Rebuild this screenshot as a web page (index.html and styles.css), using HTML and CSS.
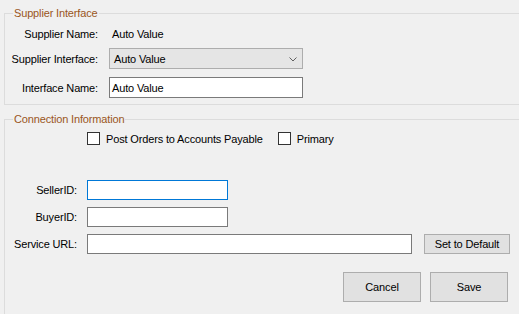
FILE: index.html
```html
<!DOCTYPE html>
<html>
<head>
<meta charset="utf-8">
<link rel="stylesheet" href="styles.css">
</head>
<body>
<div class="form">
  <fieldset class="group g1">
    <legend>Supplier Interface</legend>
    <div class="row r1">
      <span class="label l1">Supplier Name:</span>
      <span class="value">Auto Value</span>
    </div>
    <div class="row r2">
      <span class="label l1">Supplier Interface:</span>
      <div class="combo">
        <span>Auto Value</span>
        <svg class="chev" width="8" height="5" viewBox="0 0 8 5"><path d="M0.5 0.5 L4 4 L7.5 0.5" fill="none" stroke="#606060" stroke-width="1"/></svg>
      </div>
    </div>
    <div class="row r3">
      <span class="label l1">Interface Name:</span>
      <div class="textbox tb1">Auto Value</div>
    </div>
  </fieldset>

  <fieldset class="group g2">
    <legend>Connection Information</legend>
    <div class="checks">
      <label class="check"><span class="box"></span><span>Post Orders to Accounts Payable</span></label>
      <label class="check c2"><span class="box"></span><span>Primary</span></label>
    </div>
    <div class="row s1">
      <span class="label l2">SellerID:</span>
      <div class="textbox tb2 focus"></div>
    </div>
    <div class="row s2">
      <span class="label l2">BuyerID:</span>
      <div class="textbox tb2"></div>
    </div>
    <div class="row s3">
      <span class="label l2">Service URL:</span>
      <div class="textbox tb3"></div>
      <button class="btn small">Set to Default</button>
    </div>
    <div class="actions">
      <button class="btn big">Cancel</button>
      <button class="btn big">Save</button>
    </div>
  </fieldset>
</div>
</body>
</html>
```

FILE: styles.css
```css
html, body {
  margin: 0;
  padding: 0;
}
body {
  width: 519px;
  height: 314px;
  overflow: hidden;
  background: #f0f0f0;
  font-family: "Liberation Sans", Arial, sans-serif;
  font-size: 11px;
  letter-spacing: -0.15px;
  color: #000;
}
.form {
  display: flex;
  flex-direction: column;
}
.group {
  margin: 0 0 0 4px;
  padding: 0;
  border: 1px solid #dcdcdc;
  border-right: none;
  min-width: 0;
  width: 515px;
  box-sizing: border-box;
}
.group legend {
  margin-left: 8px;
  padding: 0 1px;
  line-height: 14px;
  height: 14px;
  color: #9a561c;
}
.g1 {
  margin-top: 6px;
  padding-bottom: 6px;
}
.g2 {
  margin-top: 7px;
  height: 203px;
  border-bottom: none;
}
.row {
  display: flex;
  align-items: center;
}
.label {
  text-align: right;
  flex: none;
}
.l1 {
  width: 93px;
  margin-right: 11px;
}
.l2 {
  width: 72px;
  margin-right: 10px;
}
.r1 {
  height: 20px;
  margin-top: 4px;
}
.value {
  padding-left: 3px;
}
.r2 {
  height: 21px;
  margin-top: 4px;
}
.r3 {
  height: 21px;
  margin-top: 8px;
}
.combo {
  box-sizing: border-box;
  width: 194px;
  height: 21px;
  background: #e5e5e5;
  border: 1px solid #adadad;
  display: flex;
  align-items: center;
  justify-content: space-between;
  padding: 0 5px 0 4px;
}
.chev {
  display: block;
  margin-top: 1px;
}
.textbox {
  box-sizing: border-box;
  background: #fff;
  border: 1px solid #7a7a7a;
  display: flex;
  align-items: center;
  padding-left: 2px;
}
.tb1 {
  width: 194px;
  height: 21px;
}
.tb2 {
  width: 141px;
  height: 20px;
}
.tb3 {
  width: 325px;
  height: 20px;
}
.focus {
  border-color: #0078d7;
}
.checks {
  display: flex;
  align-items: center;
  margin-top: 6px;
  padding-left: 82px;
  height: 13px;
}
.check {
  display: flex;
  align-items: center;
  gap: 6px;
}
.c2 {
  margin-left: 15px;
}
.box {
  box-sizing: border-box;
  width: 13px;
  height: 13px;
  border: 1px solid #333;
  background: #fff;
  flex: none;
}
.s1 {
  height: 20px;
  margin-top: 35px;
}
.s2 {
  height: 20px;
  margin-top: 7px;
}
.s3 {
  height: 20px;
  margin-top: 7px;
}
.btn {
  box-sizing: border-box;
  font: inherit;
  letter-spacing: inherit;
  color: #000;
  background: #e1e1e1;
  border: 1px solid #adadad;
  padding: 0;
  margin: 0;
}
.small {
  width: 86px;
  height: 20px;
  margin-left: 12px;
}
.actions {
  display: flex;
  justify-content: flex-end;
  gap: 9px;
  margin-top: 18px;
  padding-right: 11px;
}
.big {
  width: 78px;
  height: 30px;
}
```
